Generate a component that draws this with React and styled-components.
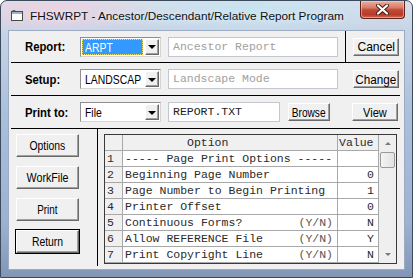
import React from 'react'
import styled, { createGlobalStyle } from 'styled-components'

const GlobalStyle = createGlobalStyle`
  html, body {
    margin: 0;
    padding: 0;
    background: #fff;
  }
  body {
    width: 413px;
    height: 278px;
    overflow: hidden;
    font-family: "Liberation Sans", Arial, sans-serif;
  }
`

const Window = styled.div`
  width: 413px;
  height: 278px;
  box-sizing: border-box;
  display: flex;
  flex-direction: column;
  padding: 0 7px 7px 7px;
  border: 1px solid #3c4a5e;
  border-radius: 7px 7px 0 0;
  background:
    radial-gradient(ellipse 110px 26px at 50px 10px, rgba(238, 208, 224, 0.85), transparent),
    radial-gradient(ellipse 160px 24px at 250px 10px, rgba(196, 228, 242, 0.9), transparent),
    linear-gradient(180deg, #dadfea 0px, #c7d4e6 30px, #acc0dc 110px, #9db2d3 220px, #8194b4 278px);
`

const TitleBar = styled.div`
  height: 29px;
  display: flex;
  align-items: center;
  padding-left: 3px;
`

const TitleText = styled.span`
  margin-left: 7px;
  font-family: "Liberation Sans", "Noto Sans", sans-serif;
  font-size: 11.8px;
  color: #111;
  text-shadow: 0 0 6px rgba(255, 255, 255, 0.9);
`

const CloseButton = styled.div`
  margin-left: auto;
  align-self: flex-start;
  width: 45px;
  height: 18px;
  box-sizing: border-box;
  border: 1px solid #5e2219;
  border-top: none;
  border-radius: 0 0 4px 4px;
  background: linear-gradient(180deg, #eab0a2 0%, #d77a66 40%, #c04a36 52%, #b73a28 80%, #cf6a52 100%);
  display: flex;
  align-items: center;
  justify-content: center;
  box-shadow: inset 0 0 0 1px rgba(255, 220, 210, 0.5);
`

const Client = styled.div`
  flex: 1;
  background: #f0f0f0;
  border: 1px solid #9aabc2;
  display: flex;
  flex-direction: column;
`

const FormRow = styled.div`
  height: ${p => p.$h}px;
  margin: 0 4px 0 2px;
  border-bottom: 1px solid #000;
  display: flex;
  align-items: center;
`

const LabelCell = styled.div`
  width: 69px;
  box-sizing: border-box;
  padding-left: 14px;
  font-size: 13px;
  font-weight: bold;
  color: #000;
  white-space: nowrap;
`

const Squeeze = styled.span`
  display: inline-block;
  transform: scaleX(${p => p.$sx || 0.86});
  transform-origin: ${p => p.$origin || 'center'};
  white-space: nowrap;
`

const Combo = styled.div`
  width: 81px;
  height: 20px;
  box-sizing: border-box;
  border: 1px solid #8f8f8f;
  border-right-color: #d4d4d4;
  border-bottom-color: #d4d4d4;
  background: #fff;
  display: flex;
  align-items: center;
  padding: 1px;
`

const ComboValue = styled.div`
  flex: 1;
  height: 16px;
  box-sizing: border-box;
  padding-left: 2px;
  font-size: 13px;
  line-height: 15px;
  color: ${p => (p.$selected ? '#fff' : '#000')};
  background: ${p => (p.$selected ? '#3399ff' : 'transparent')};
  border: 1px dotted ${p => (p.$selected ? '#e8e070' : 'transparent')};
  overflow: hidden;
`

const ComboArrow = styled.div`
  width: 14px;
  height: 16px;
  margin-left: 2px;
  box-sizing: border-box;
  background: #f0f0f0;
  border: 1px solid;
  border-color: #fff #696969 #696969 #fff;
  box-shadow: inset -1px -1px 0 #a0a0a0;
  display: flex;
  align-items: center;
  justify-content: center;
  &::after {
    content: '';
    border-left: 4px solid transparent;
    border-right: 4px solid transparent;
    border-top: 4px solid #000;
    margin-top: 1px;
  }
`

const Field = styled.div`
  width: ${p => p.$w}px;
  height: 20px;
  margin-left: 7px;
  box-sizing: border-box;
  border: 1px solid #c4c8ce;
  background: #fff;
  padding-left: 4px;
  font-family: "Liberation Mono", "Courier New", monospace;
  font-size: 11.5px;
  line-height: 18px;
  color: ${p => (p.$disabled ? '#a0a0a0' : '#222')};
  white-space: nowrap;
  overflow: hidden;
`

const Separator = styled.div`
  align-self: stretch;
  width: 1px;
  margin-left: 7px;
  background: #000;
`

const Button = styled.div`
  width: ${p => p.$w}px;
  height: ${p => p.$h || 18}px;
  margin-left: ${p => p.$ml || 0}px;
  box-sizing: border-box;
  background: #f0f0f0;
  border: 1px solid;
  border-color: #fff #6a6a6a #6a6a6a #fff;
  box-shadow: ${p => (p.$default ? '0 0 0 1px #000, inset -1px -1px 0 #a0a0a0' : 'inset -1px -1px 0 #a0a0a0')};
  display: flex;
  align-items: center;
  justify-content: center;
  font-size: 13px;
  color: #000;
  flex-shrink: 0;
`

const Bottom = styled.div`
  flex: 1;
  display: flex;
  align-items: flex-start;
`

const SideColumn = styled.div`
  width: 89px;
  align-self: stretch;
  box-sizing: border-box;
  margin-bottom: 3px;
  padding: 5px 0 0 7px;
  border-right: 1px solid #000;
  display: flex;
  flex-direction: column;
  gap: 9px;
`

const GridBox = styled.div`
  margin: 5px 0 0 6px;
  width: 293px;
  height: 130px;
  box-sizing: border-box;
  border: 1px solid #3a3a3a;
  display: flex;
  background: #fff;
`

const Table = styled.div`
  width: 274px;
  display: flex;
  flex-direction: column;
`

const GridRow = styled.div`
  display: grid;
  grid-template-columns: 18px 215px 41px;
  height: 16px;
  font-family: "Liberation Mono", "Courier New", monospace;
  font-size: 11.5px;
  color: #2a2a2a;
`

const Cell = styled.div`
  box-sizing: border-box;
  border-right: 1px solid #a8a8a8;
  border-bottom: 1px solid #a8a8a8;
  background: ${p => (p.$fixed ? '#f0f0f0' : '#fff')};
  line-height: 15px;
  padding: ${p => p.$pad || '0 0 0 2px'};
  display: flex;
  justify-content: ${p => p.$justify || 'flex-start'};
  white-space: pre;
  overflow: hidden;
`

const Hint = styled.span`
  color: #555;
`

const ScrollBar = styled.div`
  width: 17px;
  background: #efefef;
  display: flex;
  flex-direction: column;
`

const ScrollArrow = styled.div`
  height: 17px;
  display: flex;
  align-items: center;
  justify-content: center;
  &::after {
    content: '';
    border-left: 3px solid transparent;
    border-right: 3px solid transparent;
    ${p => (p.$down ? 'border-top: 3px solid #7a7a7a;' : 'border-bottom: 3px solid #7a7a7a;')}
  }
`

const Thumb = styled.div`
  height: 16px;
  margin: 0 1px;
  box-sizing: border-box;
  border: 1px solid #9a9a9a;
  border-radius: 2px;
  background: linear-gradient(90deg, #f4f4f4, #e2e2e2);
`

const Track = styled.div`
  flex: 1;
`

const rows = [
  ['1', '----- Page Print Options -----', '', ''],
  ['2', 'Beginning Page Number', '', '0'],
  ['3', 'Page Number to Begin Printing', '', '1'],
  ['4', 'Printer Offset', '', '0'],
  ['5', 'Continuous Forms?', '(Y/N)', 'N'],
  ['6', 'Allow REFERENCE File', '(Y/N)', 'Y'],
  ['7', 'Print Copyright Line', '(Y/N)', 'N'],
]

const AppIcon = () => (
  <svg width="12" height="11" viewBox="0 0 12 11">
    <rect x="0.5" y="1.5" width="11" height="9" fill="#fdfdfd" stroke="#4a4a4a" />
    <rect x="1" y="2" width="10" height="2" fill="#9fb4cc" />
    <path d="M0.5 1.5 L3 0.5 L5 1.5" fill="none" stroke="#4a4a4a" />
  </svg>
)

const CloseGlyph = () => (
  <svg width="13" height="11" viewBox="0 0 13 11">
    <path d="M2 1.5 L11 9.5 M11 1.5 L2 9.5" stroke="#4b1a14" strokeWidth="4" strokeLinecap="round" />
    <path d="M2 1.5 L11 9.5 M11 1.5 L2 9.5" stroke="#fff" strokeWidth="2.2" strokeLinecap="round" />
  </svg>
)

const ComboBox = ({ value, selected }) => (
  <Combo>
    <ComboValue $selected={selected}>
      <Squeeze $sx={0.8} $origin="left">{value}</Squeeze>
    </ComboValue>
    <ComboArrow />
  </Combo>
)

const Label = ({ children }) => (
  <LabelCell>
    <Squeeze $sx={0.87} $origin="left">{children}</Squeeze>
  </LabelCell>
)

const Btn = ({ children, sx = 0.8, ...rest }) => (
  <Button {...rest}>
    <Squeeze $sx={sx}>{children}</Squeeze>
  </Button>
)

export default function App() {
  return (
    <>
      <GlobalStyle />
      <Window>
        <TitleBar>
          <AppIcon />
          <TitleText>FHSWRPT - Ancestor/Descendant/Relative Report Program</TitleText>
          <CloseButton>
            <CloseGlyph />
          </CloseButton>
        </TitleBar>
        <Client>
          <FormRow $h={31}>
            <Label>Report:</Label>
            <ComboBox value="ARPT" selected />
            <Field $w={170} $disabled>Ancestor Report</Field>
            <Separator />
            <Btn $w={46} $ml={7} sx={0.93}>Cancel</Btn>
          </FormRow>
          <FormRow $h={32}>
            <Label>Setup:</Label>
            <ComboBox value="LANDSCAP" />
            <Field $w={170} $disabled>Landscape Mode</Field>
            <Btn $w={46} $ml={15} sx={0.9}>Change</Btn>
          </FormRow>
          <FormRow $h={32}>
            <Label>Print to:</Label>
            <ComboBox value="File" />
            <Field $w={112}>REPORT.TXT</Field>
            <Btn $w={42} $ml={8} sx={0.78}>Browse</Btn>
            <Btn $w={46} $ml={22} sx={0.85}>View</Btn>
          </FormRow>
          <Bottom>
            <SideColumn>
              <Btn $w={63} $h={23}>Options</Btn>
              <Btn $w={63} $h={23} sx={0.82}>WorkFile</Btn>
              <Btn $w={63} $h={23} sx={0.76}>Print</Btn>
              <Btn $w={63} $h={23} $default>Return</Btn>
            </SideColumn>
            <GridBox>
              <Table>
                <GridRow>
                  <Cell $fixed />
                  <Cell $fixed $pad="0 0 0 64px">Option</Cell>
                  <Cell $fixed $pad="0 0 0 1px">Value</Cell>
                </GridRow>
                {rows.map(([n, text, hint, value]) => (
                  <GridRow key={n}>
                    <Cell $fixed>{n}</Cell>
                    <Cell $justify="space-between" $pad="0 4px 0 2px">
                      <span>{text}</span>
                      {hint && <Hint>{hint}</Hint>}
                    </Cell>
                    <Cell $justify="flex-end" $pad="0 4px 0 0">{value}</Cell>
                  </GridRow>
                ))}
              </Table>
              <ScrollBar>
                <ScrollArrow />
                <Thumb />
                <Track />
                <ScrollArrow $down />
              </ScrollBar>
            </GridBox>
          </Bottom>
        </Client>
      </Window>
    </>
  )
}
